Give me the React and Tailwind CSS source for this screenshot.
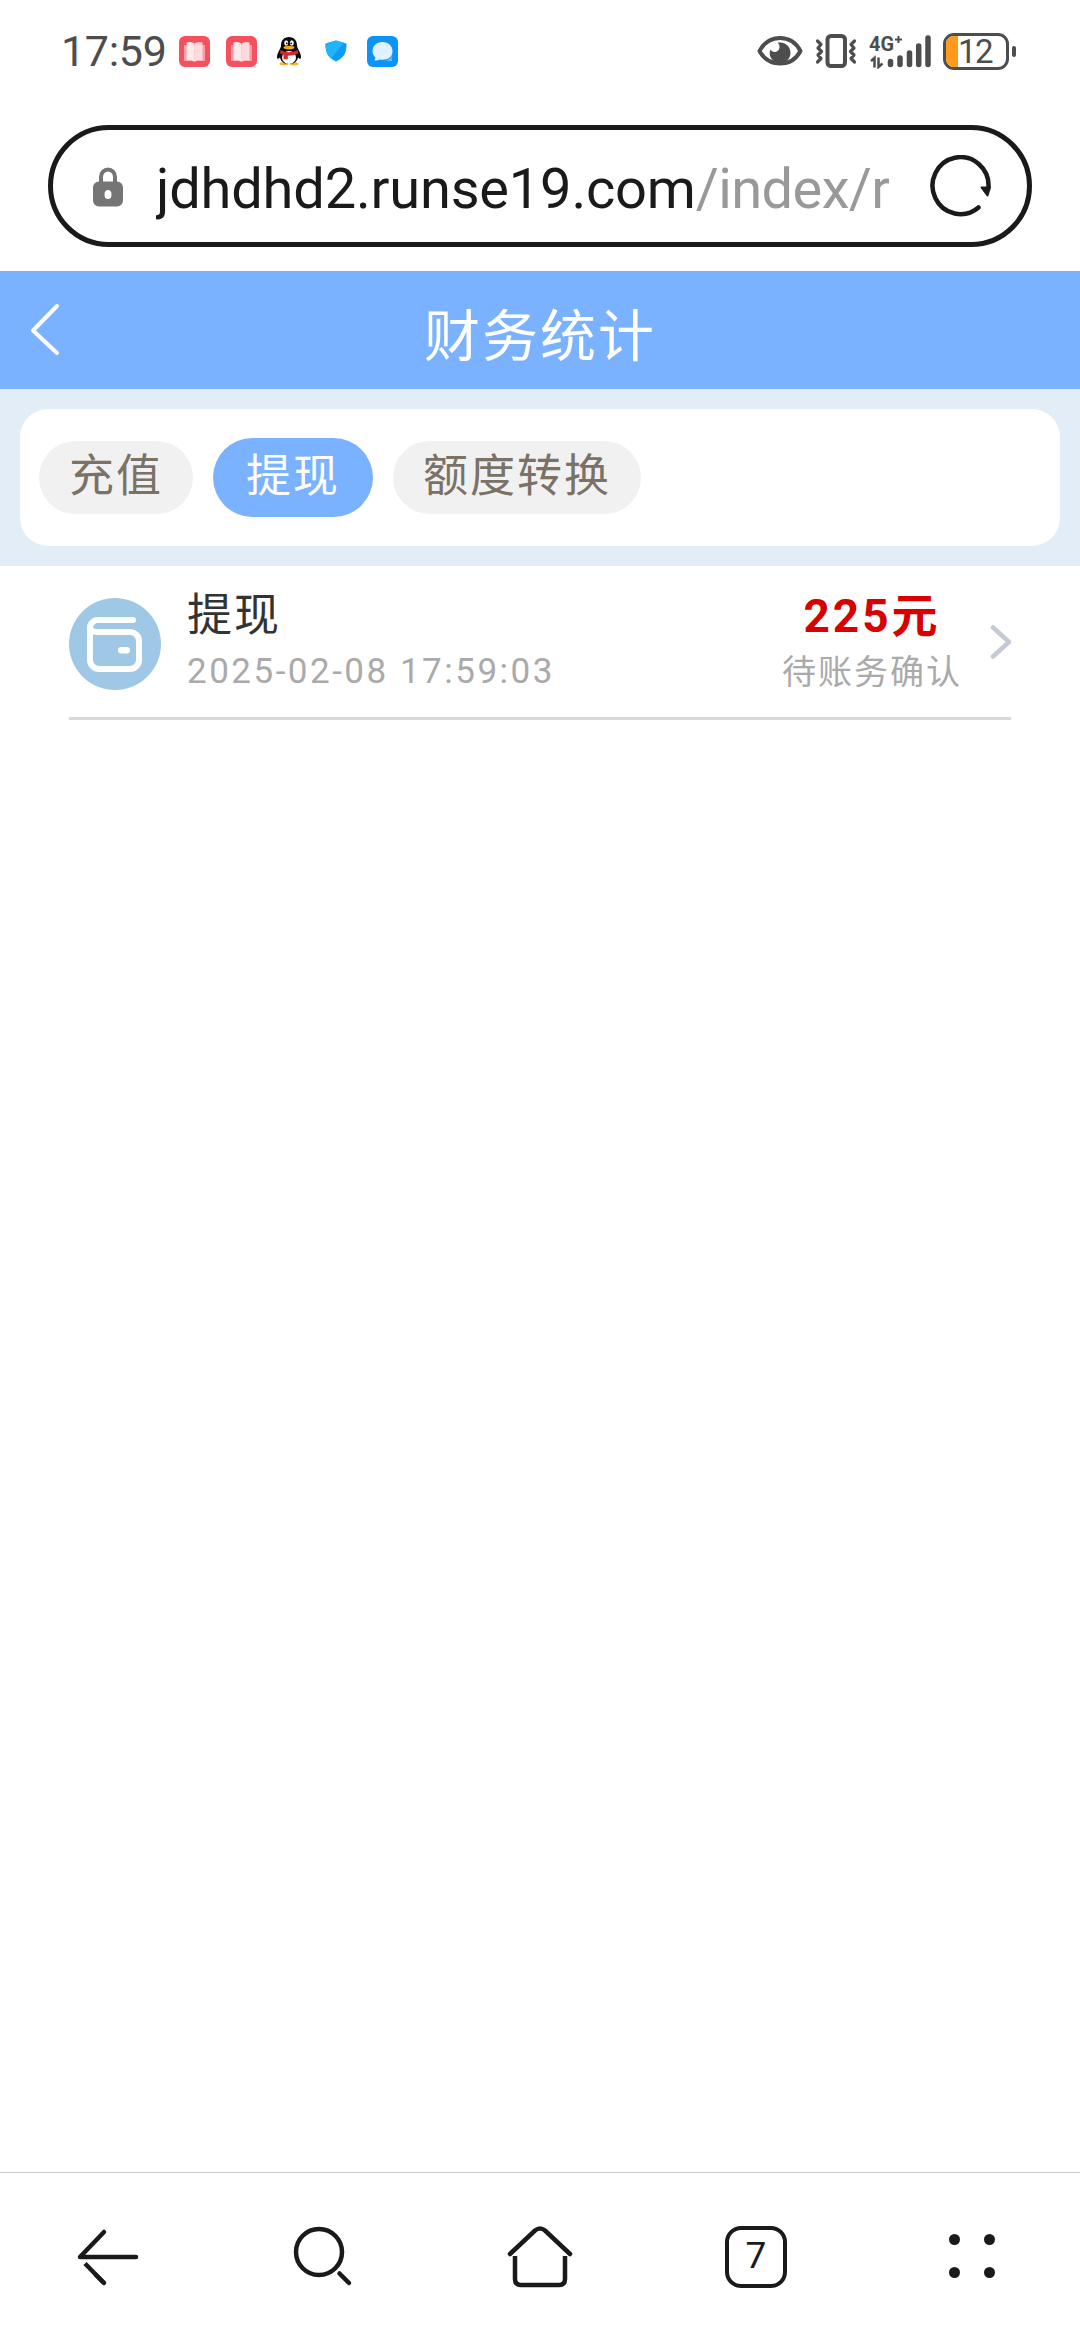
import React from 'react';

const tabs = [
  { id: 'recharge', label: '充值' },
  { id: 'withdraw', label: '提现' },
  { id: 'transfer', label: '额度转换' },
];

const records = [
  { id: 1, title: '提现', time: '2025-02-08 17:59:03', amount: '225元', status: '待账务确认' },
];

const BookIcon = ({ className }) => (
  <svg className={className} viewBox="0 0 31 31">
    <rect width="31" height="31" rx="6" fill="#f5515c" />
    <path d="M5 9h21v16h-8l-2.500 1-2.500-1H5z" fill="#fb9ea3" />
    <path d="M7.500 6.500q5-1.500 8 1v18q-3-2-8-1z" fill="#ffe9ea" />
    <path d="M23.500 6.500q-5-1.500-8 1v18q3-2 8-1z" fill="#ffd9db" />
  </svg>
);

const PenguinIcon = () => (
  <svg className="ml-5 h-[29px] w-6" viewBox="0 0 24 29">
    <ellipse cx="7" cy="26.800" rx="4.500" ry="1.700" fill="#f2b632" />
    <ellipse cx="17" cy="26.800" rx="4.500" ry="1.700" fill="#f2b632" />
    <path d="M12 0C7 0 4 3.500 4 8.500c0 3-4 7-4 11.500 0 2 1 2.500 3 .5C4 25 7.500 27 12 27s8-2 9-6.500c2 2 3 1.500 3-.5 0-4.500-4-8.500-4-11.500C20 3.500 17 0 12 0z" fill="#0a0a0a" />
    <ellipse cx="12" cy="20.500" rx="7" ry="6.500" fill="#fff" />
    <path d="M3.500 13q8.500 4.500 17 0l.8 3.200q-5 2.500-10.500 2.500v3.600H6.500v-4.600l-3.500-1.500z" fill="#d8262c" />
    <ellipse cx="9.200" cy="6" rx="2" ry="2.700" fill="#fff" />
    <ellipse cx="14.800" cy="6" rx="2" ry="2.700" fill="#fff" />
    <circle cx="9.800" cy="6.300" r="0.900" />
    <circle cx="14.200" cy="6.300" r="0.900" />
    <ellipse cx="12" cy="10.600" rx="5.500" ry="1.800" fill="#f2a91e" />
  </svg>
);

const ShieldIcon = () => (
  <svg className="ml-6 h-[22px] w-[22px]" viewBox="0 0 22 22">
    <path d="M11 .5 20.500 3.200q1 .3 1 1.300C21.500 13 18.500 18 11 21.500 3.500 18 .5 13 .5 4.500q0-1 1-1.300z" fill="#0c9bf5" />
    <path d="M11 .5 1.500 3.200q-1 .3-1 1.300C.5 11 2 15 6 18.500L19 2.800z" fill="#22b3fa" />
  </svg>
);

const ChatIcon = () => (
  <svg className="ml-5 h-[31px] w-[31px]" viewBox="0 0 31 31">
    <rect width="31" height="31" rx="6" fill="#0b93f7" />
    <path d="M15.500 6C9.500 6 5.500 10 5.500 15c0 2.800 1.300 5 3 6.500L7.500 24.500c2 .2 4-.3 5-1 9 1.500 13-3 13-8.500 0-5-4-9-10-9z" fill="#dff2ff" />
    <path d="M18 24c4 0 6-2 7-4 .5 1.500-.5 2.500-.5 3l.5 2c-2 .3-4.500 0-7-1z" fill="#6cc3fb" />
  </svg>
);

const EyeIcon = () => (
  <svg className="h-8 w-[46px]" viewBox="0 0 46 32">
    <path d="M2.500 16C7 7.500 14 3 23 3s16 4.500 20.500 13C39 24.500 32 28.500 23 28.500S7 24.500 2.500 16z" fill="none" stroke="#4d4d4d" strokeWidth="4" strokeLinejoin="round" />
    <path d="M23 7.500c6 0 10.500 4.500 10.500 10.300 0 6-4.500 10.200-10.500 10.200s-10.300-4.500-10.300-10c0-1.500.3-2.600.8-3.500 1.500 3.500 8.500 3.500 9-2 .2-2-.6-3.800-2-4.700.8-.2 1.600-.3 2.500-.3z" fill="#4d4d4d" />
  </svg>
);

const VibrateIcon = () => (
  <svg className="ml-3 h-[34px] w-[42px]" viewBox="0 0 42 34" fill="none" stroke="#4d4d4d">
    <rect x="12.500" y="2" width="17.500" height="30" rx="3.500" strokeWidth="4" />
    <path d="M2.500 7 6 10.500 3 14l3.500 3.500L3 21l3 3.500L2.500 28M39.500 7 36 10.500l3 3.500-3.500 3.500L39 21l-3 3.500 3.500 3.500" strokeWidth="3.200" strokeLinecap="round" strokeLinejoin="round" />
  </svg>
);

const SignalIcon = () => (
  <svg className="ml-3 h-9 w-[64px]" viewBox="0 0 64 36">
    <text x="0" y="18" fontSize="21" fontWeight="700" fill="#4d4d4d" fontFamily="Roboto, sans-serif" textLength="25" lengthAdjust="spacingAndGlyphs">4G</text>
    <path d="M29.500 3v7M26 6.500h7" stroke="#4d4d4d" strokeWidth="2" />
    <path d="M2 28l3.500-3v9.500M9.500 24.500V34l4-3.500" fill="none" stroke="#4d4d4d" strokeWidth="2.500" />
    <path d="M21.500 28.500v3M31 25v6.500M40.500 20v11.500M49.700 13v18.500M59 5v26.500" stroke="#4d4d4d" strokeWidth="5.500" strokeLinecap="round" />
  </svg>
);

const StatusBar = () => (
  <div className="flex h-[102px] items-center justify-between pr-16 pl-[61px]">
    <div className="flex items-center">
      <span className="w-[118px] text-[43px] leading-none tracking-[-0.3px] whitespace-nowrap text-[#4d4d4d]">17:59</span>
      <BookIcon className="h-[31px] w-[31px]" />
      <BookIcon className="ml-4 h-[31px] w-[31px]" />
      <PenguinIcon />
      <ShieldIcon />
      <ChatIcon />
    </div>
    <div className="flex items-center">
      <EyeIcon />
      <VibrateIcon />
      <SignalIcon />
      <div className="ml-2.5 flex h-[37px] w-[66px] overflow-hidden rounded-[11px] border-[3px] border-[#4d4d4d]">
        <div className="w-3 bg-[#ff9a1c]" />
        <span className="text-[33px] leading-[31px] tracking-[-1.5px] text-[#4d4d4d]">12</span>
      </div>
      <div className="ml-[3px] h-[11px] w-1 rounded-sm bg-[#4d4d4d]" />
    </div>
  </div>
);

const AddressBar = () => (
  <div className="h-[169px] px-12 pt-[23px]">
    <div className="flex h-[122px] items-center rounded-full border-[5px] border-[#1a1a1a] pr-9 pl-10">
      <svg className="mt-0.5 h-10 w-[30px]" viewBox="0 0 30 40">
        <path d="M8 16V10a7 7.500 0 0 1 14 0v6" fill="none" stroke="#757575" strokeWidth="4" />
        <path fillRule="evenodd" d="M6 14.500h18a6 6 0 0 1 6 6v13a6 6 0 0 1-6 6H6a6 6 0 0 1-6-6v-13a6 6 0 0 1 6-6zM15 23a3.500 4.500 0 1 0 0 9 3.500 4.500 0 0 0 0-9z" fill="#757575" />
      </svg>
      <div className="ml-[33px] w-[733px] overflow-hidden pt-1.5 text-[56px] leading-[80px] tracking-[-0.2px] whitespace-nowrap">
        <span className="text-[#1a1a1a]">jdhdhd2.runse19.com</span>
        <span className="tracking-[-0.6px] text-[#999999]">/index/r</span>
      </div>
      <svg className="ml-auto h-[62px] w-[62px]" viewBox="0 0 62 62">
        <path d="M49.500 52.500A28 28.500 0 1 1 59.500 32" fill="none" stroke="#1a1a1a" strokeWidth="4.500" strokeLinecap="round" />
        <path d="M52.500 32.500h8.500l-2.500 8z" fill="#1a1a1a" stroke="#1a1a1a" strokeWidth="2" strokeLinejoin="round" />
      </svg>
    </div>
  </div>
);

const PageHeader = () => (
  <header className="grid h-[118px] grid-cols-[1fr_auto_1fr] items-center bg-[#7ab2ff]">
    <svg className="-mt-1 ml-7 h-14 w-9" viewBox="0 0 36 56">
      <path d="M29 6 5 30.500 29 53" fill="none" stroke="#fff" strokeWidth="4" strokeLinecap="round" strokeLinejoin="round" />
    </svg>
    <h1 className="pt-3.5 text-[56px] leading-[80px] tracking-[2px] text-white">财务统计</h1>
  </header>
);

const FilterTabs = ({ active }) => (
  <div className="h-[177px] bg-[#e3edf7] p-5">
    <div className="flex h-[137px] items-center gap-5 rounded-[28px] bg-white px-[19px]">
      {tabs.map((tab) => (
        <button
          key={tab.id}
          type="button"
          className={`rounded-full text-[45px] tracking-[2px] ${
            tab.id === active
              ? 'h-[79px] bg-[#7ab2ff] px-[33px] pb-0.5 leading-[77px] text-white'
              : 'h-[73px] bg-[#f1f1f1] px-[30px] pb-0.5 leading-[71px] text-[#7a7167]'
          }`}
        >
          {tab.label}
        </button>
      ))}
    </div>
  </div>
);

const WalletIcon = () => (
  <svg className="h-[92px] w-[92px] shrink-0" viewBox="0 0 92 92">
    <circle cx="46" cy="46" r="46" fill="#9ec8e6" />
    <path d="M64 22H29a8 8 0 0 0-8 8v32a9 9 0 0 0 9 9h31a9 9 0 0 0 9-9V43a9 9 0 0 0-9-9H27a6 6 0 0 1-6-6" fill="none" stroke="#fff" strokeWidth="6" strokeLinecap="round" strokeLinejoin="round" />
    <rect x="49" y="49" width="12" height="6.500" rx="3" fill="#fff" />
  </svg>
);

const RecordRow = ({ record }) => (
  <li className="flex h-[154px] items-center border-b-[3px] border-[#d8d8d8] pt-[5px]">
    <WalletIcon />
    <div className="ml-[26px]">
      <div className="text-[45px] leading-[56px] tracking-[2px] text-[#333333]">{record.title}</div>
      <div className="text-[35px] leading-[56px] tracking-[2.500px] text-[#aaaaaa]">{record.time}</div>
    </div>
    <div className="ml-auto text-center">
      <div className="text-[46px] leading-[56px] font-bold tracking-[3px] text-[#d90000]">{record.amount}</div>
      <div className="text-[34px] leading-[56px] tracking-[2px] text-[#aaaaaa]">{record.status}</div>
    </div>
    <svg className="-mt-[5px] ml-[27px] h-9 w-[22px]" viewBox="0 0 22 36">
      <path d="M4 3.500 20 18 4 32.500" fill="none" stroke="#c3cad4" strokeWidth="4.500" strokeLinecap="round" strokeLinejoin="round" />
    </svg>
  </li>
);

const BottomBar = () => (
  <nav className="grid h-[168px] grid-cols-5 items-center justify-items-center border-t border-[#c9c9c9]">
    <svg className="h-16 w-16" viewBox="0 0 64 64" fill="none" stroke="#1a1a1a" strokeWidth="4.500" strokeLinecap="round">
      <path d="M60 32H4L28 7" strokeLinejoin="round" />
      <path d="m9 38.500 19 19.500" strokeLinecap="butt" />
      <path d="m20 50 8 8" />
    </svg>
    <svg className="h-16 w-16" viewBox="0 0 64 64" fill="none" stroke="#1a1a1a" strokeWidth="4.500" strokeLinecap="round">
      <circle cx="27" cy="27" r="23" />
      <path d="m47.500 48.500 9.500 9.500" />
    </svg>
    <svg className="h-16 w-[66px]" viewBox="0 0 66 64" fill="none" stroke="#1a1a1a" strokeWidth="4.500" strokeLinecap="round">
      <path d="M3 29 28 5.500q5-4 10 0L63 29" />
      <path d="M8 31v23q0 6 6 6h38q6 0 6-6V31" strokeLinecap="butt" />
    </svg>
    <div className="flex h-[62px] w-[62px] items-center justify-center rounded-[16px] border-[4.500px] border-[#1a1a1a] pb-0.5 text-[37px] leading-none text-[#1a1a1a]">7</div>
    <div className="-mt-0.5 grid grid-cols-2 gap-x-6 gap-y-[22px]">
      <i className="h-[11px] w-[11px] rounded-full bg-[#1a1a1a]" />
      <i className="h-[11px] w-[11px] rounded-full bg-[#1a1a1a]" />
      <i className="h-[11px] w-[11px] rounded-full bg-[#1a1a1a]" />
      <i className="h-[11px] w-[11px] rounded-full bg-[#1a1a1a]" />
    </div>
  </nav>
);

const App = () => (
  <div className="flex h-[2340px] w-[1080px] flex-col overflow-hidden bg-white font-['Roboto','Noto_Sans_CJK_SC',sans-serif]">
    <StatusBar />
    <AddressBar />
    <PageHeader />
    <FilterTabs active="withdraw" />
    <ul className="flex-1 px-[69px]">
      {records.map((record) => (
        <RecordRow key={record.id} record={record} />
      ))}
    </ul>
    <BottomBar />
  </div>
);

export default App;
